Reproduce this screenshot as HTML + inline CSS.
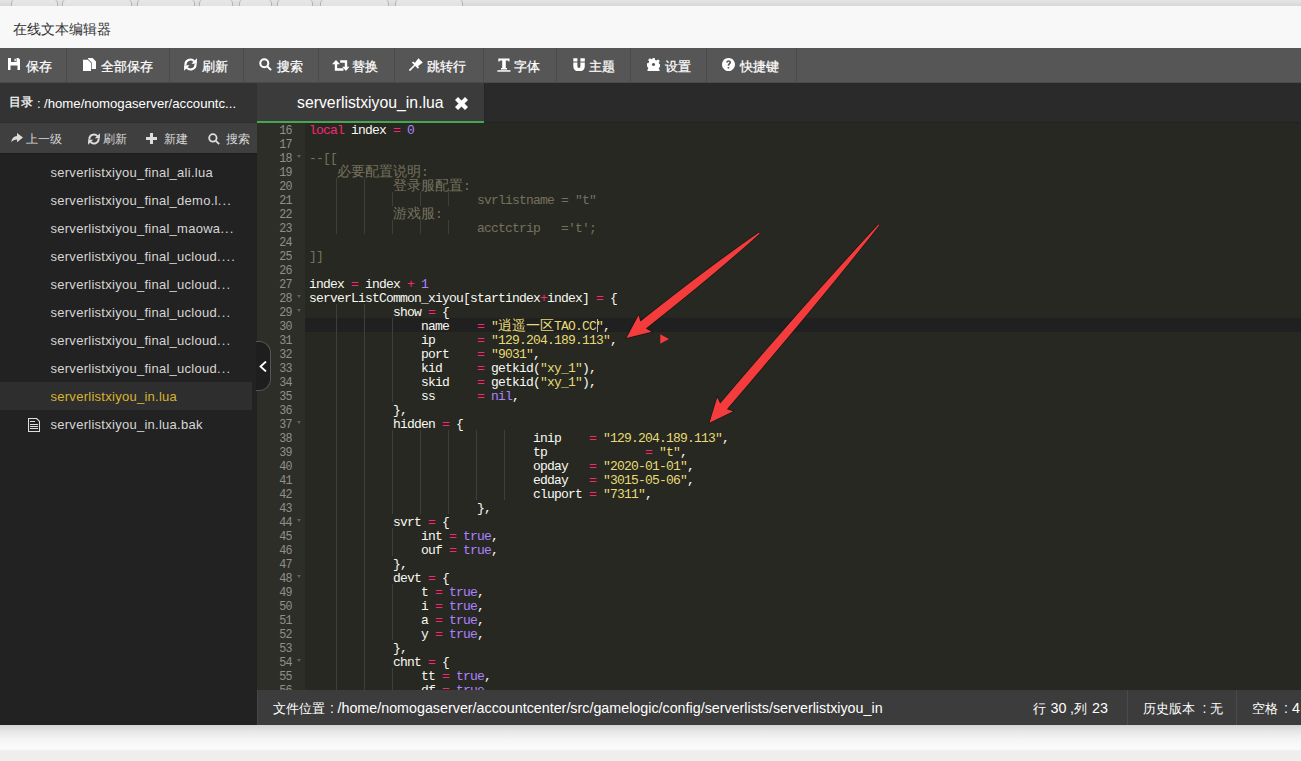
<!DOCTYPE html>
<html><head><meta charset="utf-8">
<style>
*{margin:0;padding:0;box-sizing:border-box}
html,body{width:1301px;height:761px;overflow:hidden;background:#eeeeee;font-family:"Liberation Sans",sans-serif}
.t{position:absolute;line-height:1;white-space:pre}
.k{-webkit-text-stroke:0.25px currentColor}
.ic{position:absolute}
#topstrip{position:absolute;left:0;top:0;width:1301px;height:6px;background:linear-gradient(#e4e4e4,#d8d8d8);overflow:hidden}
#topstrip b{position:absolute;top:-1px;height:12px;border:1px solid #b4b4b4;border-top:none;border-bottom:none;border-radius:6px 6px 0 0/4px 4px 0 0;background:linear-gradient(#e8e8e8,#dcdcdc)}
#title{position:absolute;left:0;top:6px;width:1301px;height:42px;background:#f8f8f8}
#toolbar{position:absolute;left:0;top:48px;width:1301px;height:35px;background:#565656;border-bottom:1px solid #4a4a4a}
.tsep{position:absolute;top:48px;width:1px;height:35px;background:#4b4b4b}
#side{position:absolute;left:0;top:83px;width:257px;height:642px;background:#222}
#sidehead{position:absolute;left:0;top:83px;width:257px;height:40px;background:#333}
#subbar{position:absolute;left:0;top:122px;width:257px;height:32px;background:#3f3f3f;border-top:1px solid #2e2e2e;border-bottom:1px solid #1c1c1c}
#sel{position:absolute;left:0;top:382px;width:252px;height:28px;background:#2e2e2e}
#tabbar{position:absolute;left:257px;top:83px;width:1044px;height:40px;background:#2a2a2a}
#tab{position:absolute;left:257px;top:83px;width:228px;height:40px;background:#3b3b3b;border-right:1px solid #262626}
#tabline{position:absolute;left:257px;top:122px;width:1044px;height:1px;background:#222}
#tabgreen{position:absolute;left:257px;top:120.5px;width:227px;height:2.5px;background:#46a84c}
#editor{position:absolute;left:257px;top:123px;width:1044px;height:567px;background:#272822}
#gutter{position:absolute;left:257px;top:123px;width:48px;height:567px;background:#2d2e28}
#codewrap{position:absolute;left:0;top:123px;width:1301px;height:567px;overflow:hidden}
#codewrap>*{margin-top:-123px}
#active{position:absolute;left:305px;top:318px;width:996px;height:14px;background:#202020}
#gactive{display:none}
.row{position:absolute;left:0;height:14px;width:1301px}
.cm{position:absolute;top:2px;font-family:"Liberation Mono",monospace;font-size:13px;letter-spacing:-0.8px;line-height:14px;white-space:pre}
.cj{position:absolute;top:0.5px;width:14px;font-size:13.5px;line-height:14px;text-align:center}
.g{position:absolute;width:1px;height:14px;background:#3e3f38}
.ln{position:absolute;left:257px;width:35px;transform:scaleX(0.9);transform-origin:34px 0;text-align:right;font-family:"Liberation Mono",monospace;font-size:13px;letter-spacing:-0.8px;line-height:14px;color:#8f908a;padding-top:2px;height:16px}
.fw{position:absolute;left:297px;width:0;height:0;border-left:2.5px solid transparent;border-right:2.5px solid transparent;border-top:3px solid #5f605a}
#cursor{position:absolute;left:597px;top:319px;width:1px;height:13px;background:#b8b8b0}
#status{position:absolute;left:257px;top:690px;width:1044px;height:35px;background:#3c3c3c;border-left:1px solid #464646}
.ssep{position:absolute;top:690px;width:1px;height:35px;background:#4a4a4a}
#bottom{position:absolute;left:0;top:725px;width:1301px;height:36px;background:linear-gradient(to bottom,#d4d4d4 0,#e6e6e6 6px,#f4f4f4 14px,#fafafa 22px,#fbfbfb 24px,#eeeeee 26px,#eeeeee 36px)}
#handle{position:absolute;left:256px;top:341px;width:15px;height:50px;background:#1e1e1e;border:1px solid #555;border-left:none;border-radius:0 12px 12px 0}
#chev{position:absolute;left:259px;top:361px}
#arrows{position:absolute;left:0;top:0}
</style></head><body>
<div id="topstrip"><b style="left:11px;width:47px"></b><b style="left:62px;width:70px"></b><b style="left:137px;width:58px"></b><b style="left:199px;width:34px"></b><b style="left:239px;width:33px"></b><b style="left:277px;width:36px"></b><b style="left:320px;width:69px"></b><b style="left:395px;width:68px"></b></div>
<div id="title"></div>
<span class="t" style="left:13.30px;top:21.74px;font-size:14px;color:#333">在线文本编辑器</span>
<div id="toolbar"></div>
<svg class="ic" style="left:8px;top:58px" width="12" height="12" viewBox="0 0 12 12" fill="#fff"><path fill-rule="evenodd" d="M0 0h10.5L12 1.5V12H0z M3 0h5.5v4H3z M2.5 7.5h7V12h-7z"/><path d="M6.5 0.8h1.3v2.4H6.5z"/></svg>
<span class="t k" style="left:26.00px;top:59.78px;font-size:13px;color:#fff">保存</span>
<svg class="ic" style="left:83px;top:58px" width="13" height="13" viewBox="0 0 13 13" fill="#fff"><path d="M0 1.7H4.8L8 5V13H0Z"/><path d="M5 0H9.6L13 3.4V11H8.7V4.6L5.3 1.2Z"/></svg>
<span class="t k" style="left:101.00px;top:59.78px;font-size:13px;color:#fff">全部保存</span>
<svg class="ic" style="left:184px;top:58px" width="13" height="13" viewBox="0 0 13 13" fill="#fff"><path fill="none" stroke="#fff" stroke-width="2.1" d="M1.5 7.2A5 5 0 0 1 10.2 3.3 M11.5 5.8A5 5 0 0 1 2.8 9.7"/><path d="M12.9 0.2V5.7H7.4Z M0.1 12.8V7.3H5.6Z"/></svg>
<span class="t k" style="left:202.00px;top:59.78px;font-size:13px;color:#fff">刷新</span>
<svg class="ic" style="left:259px;top:58px" width="13" height="13" viewBox="0 0 13 13" fill="#fff"><circle cx="5.3" cy="5.3" r="4" fill="none" stroke="#fff" stroke-width="2"/><path d="M7.8 9.2l1.4-1.4 3.6 3.6-1.4 1.4z"/></svg>
<span class="t k" style="left:277.00px;top:59.78px;font-size:13px;color:#fff">搜索</span>
<svg class="ic" style="left:332px;top:59.7px" width="17.4" height="11" viewBox="0 0 17.4 11" fill="#fff"><path d="M2.8 3.8H5.2V8.3H11.5V10.8H2.8Z M4 0L8 4.2H0Z"/><path d="M8.2 0.3H15.2V7.2H12.8V2.8H8.2Z M14 10.9L10.2 6.8H17.4Z"/></svg>
<span class="t k" style="left:352.00px;top:59.78px;font-size:13px;color:#fff">替换</span>
<svg class="ic" style="left:408.8px;top:58px" width="14" height="13" viewBox="0 0 14 13" fill="#fff"><path d="M2.8 4.6L4.4 3.6L10 9.2L9 10.8Z"/><path d="M5.4 5.4L9.4 0.2L13.8 4.6L8.6 8.6Z"/><path d="M0.4 12.6L6.2 6.8" stroke="#fff" stroke-width="1.6"/></svg>
<span class="t k" style="left:427.00px;top:59.78px;font-size:13px;color:#fff">跳转行</span>
<svg class="ic" style="left:496.5px;top:57.5px" width="14" height="14" viewBox="0 0 14 14" fill="#fff"><path d="M1.3 0.4H12.5V3.6H11.6L11 2.6H8.8V10H10V11.4H4V10H5.2V2.6H3L2.4 3.6H1.3Z"/><path d="M0.4 12.2H13.5V13.7H0.4Z"/></svg>
<span class="t k" style="left:514.00px;top:59.78px;font-size:13px;color:#fff">字体</span>
<svg class="ic" style="left:572.5px;top:57.5px" width="12" height="13.5" viewBox="0 0 12 13.5" fill="#fff"><path d="M0.3 0.3H4.4V3.5H0.3Z M7.4 0.3H11.8V3.5H7.4Z"/><path d="M0.3 4.6H4.4V8C4.4 9.3 5 10 6.1 10C7 10 7.4 9.3 7.4 8V4.6H11.8V8C11.8 11.5 9.5 13.5 6.05 13.5C2.6 13.5 0.3 11.5 0.3 8Z"/></svg>
<span class="t k" style="left:589.00px;top:59.78px;font-size:13px;color:#fff">主题</span>
<svg class="ic" style="left:647px;top:58px" width="13" height="13" viewBox="0 0 13 13" fill="#fff"><path fill-rule="evenodd" d="M5.3 0h2.4l0.4 1.9 1.3 0.6 1.7-1.1 1.7 1.7-1.1 1.7 0.6 1.3 1.9 0.4v2.4l-1.9 0.4-0.6 1.3 1.1 1.7-1.7 1.7-1.7-1.1-1.3 0.6-0.4 1.9H5.3l-0.4-1.9-1.3-0.6-1.7 1.1-1.7-1.7 1.1-1.7-0.6-1.3L-0.3 7.7V5.3l1.9-0.4 0.6-1.3-1.100-1.7 1.7-1.7 1.7 1.1 1.3-0.6z M6.5 4.9a1.6 1.6 0 1 0 0.01 0z"/></svg>
<span class="t k" style="left:665.00px;top:59.78px;font-size:13px;color:#fff">设置</span>
<svg class="ic" style="left:722px;top:58px" width="13" height="13" viewBox="0 0 13 13" fill="#fff"><path fill-rule="evenodd" d="M6.5 0a6.5 6.5 0 1 0 0.01 0z M4.2 4.6c0-1.4 1-2.3 2.4-2.3s2.4 0.9 2.4 2.2c0 1.6-1.7 1.7-1.7 2.9v0.3H5.7V7.3c0-1.7 1.6-1.9 1.6-2.7 0-0.5-0.3-0.8-0.8-0.8-0.5 0-0.8 0.4-0.8 0.9z M5.6 8.9h1.7v1.7H5.6z"/></svg>
<span class="t k" style="left:740.00px;top:59.78px;font-size:13px;color:#fff">快捷键</span>
<div class="tsep" style="left:66px"></div>
<div class="tsep" style="left:169px"></div>
<div class="tsep" style="left:243px"></div>
<div class="tsep" style="left:318px"></div>
<div class="tsep" style="left:394px"></div>
<div class="tsep" style="left:483px"></div>
<div class="tsep" style="left:556px"></div>
<div class="tsep" style="left:630px"></div>
<div class="tsep" style="left:706px"></div>
<div class="tsep" style="left:796px"></div>
<div id="side"></div><div id="sidehead"></div><div id="subbar"></div><div id="sel"></div>
<span class="t k" style="left:9.30px;top:97.33px;font-size:11.8px;color:#fff">目录</span>
<span class="t" style="left:37px;top:97.25px;font-size:13px;color:#fff">:</span>
<span class="t" style="left:44px;top:97.08px;font-size:13.2px;color:#fff">/home/nomogaserver/accountc...</span>
<svg class="ic" style="left:11px;top:133px" width="12" height="12" viewBox="0 0 12 12" fill="#ddd"><path d="M6 0L12 4.4L6 9.2V6.4C3.6 6.4 1.6 7.4 0.2 9.2C0.6 5.6 2.8 3.4 6 3.1Z"/></svg>
<span class="t" style="left:26.00px;top:132.52px;font-size:12px;color:#d8d8d8">上一级</span>
<svg class="ic" style="left:88px;top:133px" width="12" height="12" viewBox="0 0 13 13" fill="#ddd"><path fill="none" stroke="#ddd" stroke-width="2.1" d="M1.5 7.2A5 5 0 0 1 10.2 3.3 M11.5 5.8A5 5 0 0 1 2.8 9.7"/><path d="M12.9 0.2V5.7H7.4Z M0.1 12.8V7.3H5.6Z"/></svg>
<span class="t" style="left:103.00px;top:132.52px;font-size:12px;color:#d8d8d8">刷新</span>
<svg class="ic" style="left:146px;top:133px" width="11" height="11" viewBox="0 0 11.6 11.6" fill="#ddd"><path d="M4.2 0h3.2v4.2h4.2v3.2H7.4v4.2H4.2V7.4H0V4.2h4.2z"/></svg>
<span class="t" style="left:164.00px;top:132.52px;font-size:12px;color:#d8d8d8">新建</span>
<svg class="ic" style="left:208px;top:133px" width="12" height="12" viewBox="0 0 13 13" fill="#ddd"><circle cx="5.3" cy="5.3" r="4" fill="none" stroke="#ddd" stroke-width="2"/><path d="M7.8 9.2l1.4-1.4 3.6 3.6-1.4 1.4z"/></svg>
<span class="t" style="left:226.00px;top:132.52px;font-size:12px;color:#d8d8d8">搜索</span>
<span class="t" style="left:50.5px;top:165.55px;font-size:13px;color:#d6d6d6;letter-spacing:0.27px">serverlistxiyou_final_ali.lua</span>
<span class="t" style="left:50.5px;top:193.55px;font-size:13px;color:#d6d6d6;letter-spacing:0.27px">serverlistxiyou_final_demo.l<span style="letter-spacing:1.1px">...</span></span>
<span class="t" style="left:50.5px;top:221.55px;font-size:13px;color:#d6d6d6;letter-spacing:0.27px">serverlistxiyou_final_maowa<span style="letter-spacing:1.1px">...</span></span>
<span class="t" style="left:50.5px;top:249.55px;font-size:13px;color:#d6d6d6;letter-spacing:0.27px">serverlistxiyou_final_ucloud<span style="letter-spacing:1.1px">....</span></span>
<span class="t" style="left:50.5px;top:277.55px;font-size:13px;color:#d6d6d6;letter-spacing:0.27px">serverlistxiyou_final_ucloud<span style="letter-spacing:1.1px">...</span></span>
<span class="t" style="left:50.5px;top:305.55px;font-size:13px;color:#d6d6d6;letter-spacing:0.27px">serverlistxiyou_final_ucloud<span style="letter-spacing:1.1px">...</span></span>
<span class="t" style="left:50.5px;top:333.55px;font-size:13px;color:#d6d6d6;letter-spacing:0.27px">serverlistxiyou_final_ucloud<span style="letter-spacing:1.1px">...</span></span>
<span class="t" style="left:50.5px;top:361.55px;font-size:13px;color:#d6d6d6;letter-spacing:0.27px">serverlistxiyou_final_ucloud<span style="letter-spacing:1.1px">...</span></span>
<span class="t" style="left:50.5px;top:389.55px;font-size:13px;color:#d8b42c;letter-spacing:0.27px">serverlistxiyou_in.lua</span>
<span class="t" style="left:50.5px;top:417.55px;font-size:13px;color:#d6d6d6;letter-spacing:0.27px">serverlistxiyou_in.lua.bak</span>
<svg class="ic" style="left:28px;top:418px" width="12" height="14" viewBox="0 0 12 14" fill="none"><path fill="none" stroke="#ddd" stroke-width="1.1" d="M0.5 0.5H8.6L11.5 3.4V13.5H0.5Z"/><path fill="none" stroke="#ddd" stroke-width="1" shape-rendering="crispEdges" d="M2 3.5H7 M2 6.5H10 M2 8.5H10 M2 10.5H10"/></svg>
<div id="tabbar"></div><div id="tabline"></div><div id="tab"></div><div id="tabgreen"></div>
<span class="t" style="left:297px;top:95.17px;font-size:15.8px;color:#fff">serverlistxiyou_in.lua</span>
<svg class="ic" style="left:455px;top:97px" width="13" height="13" viewBox="0 0 13 13" fill="#fff"><path d="M3 0L6.5 3.5 10 0 13 3 9.5 6.5 13 10 10 13 6.5 9.5 3 13 0 10 3.5 6.5 0 3z"/></svg>
<div id="editor"></div><div id="gutter"></div><div id="active"></div><div id="gactive"></div>
<div id="codewrap"><div class="ln" style="top:122px">16</div>
<div class="ln" style="top:136px">17</div>
<div class="ln" style="top:150px">18</div>
<i class="fw" style="top:155px"></i>
<div class="ln" style="top:164px">19</div>
<div class="ln" style="top:178px">20</div>
<div class="ln" style="top:192px">21</div>
<div class="ln" style="top:206px">22</div>
<div class="ln" style="top:220px">23</div>
<div class="ln" style="top:234px">24</div>
<div class="ln" style="top:248px">25</div>
<div class="ln" style="top:262px">26</div>
<div class="ln" style="top:276px">27</div>
<div class="ln" style="top:290px">28</div>
<i class="fw" style="top:295px"></i>
<div class="ln" style="top:304px">29</div>
<i class="fw" style="top:309px"></i>
<div class="ln" style="top:318px">30</div>
<div class="ln" style="top:332px">31</div>
<div class="ln" style="top:346px">32</div>
<div class="ln" style="top:360px">33</div>
<div class="ln" style="top:374px">34</div>
<div class="ln" style="top:388px">35</div>
<div class="ln" style="top:402px">36</div>
<div class="ln" style="top:416px">37</div>
<i class="fw" style="top:421px"></i>
<div class="ln" style="top:430px">38</div>
<div class="ln" style="top:444px">39</div>
<div class="ln" style="top:458px">40</div>
<div class="ln" style="top:472px">41</div>
<div class="ln" style="top:486px">42</div>
<div class="ln" style="top:500px">43</div>
<div class="ln" style="top:514px">44</div>
<i class="fw" style="top:519px"></i>
<div class="ln" style="top:528px">45</div>
<div class="ln" style="top:542px">46</div>
<div class="ln" style="top:556px">47</div>
<div class="ln" style="top:570px">48</div>
<i class="fw" style="top:575px"></i>
<div class="ln" style="top:584px">49</div>
<div class="ln" style="top:598px">50</div>
<div class="ln" style="top:612px">51</div>
<div class="ln" style="top:626px">52</div>
<div class="ln" style="top:640px">53</div>
<div class="ln" style="top:654px">54</div>
<i class="fw" style="top:659px"></i>
<div class="ln" style="top:668px">55</div>
<div class="ln" style="top:682px">56</div><i class="g" style="left:336px;top:178px"></i>
<i class="g" style="left:364px;top:178px"></i>
<i class="g" style="left:336px;top:192px"></i>
<i class="g" style="left:364px;top:192px"></i>
<i class="g" style="left:392px;top:192px"></i>
<i class="g" style="left:420px;top:192px"></i>
<i class="g" style="left:448px;top:192px"></i>
<i class="g" style="left:336px;top:206px"></i>
<i class="g" style="left:364px;top:206px"></i>
<i class="g" style="left:336px;top:220px"></i>
<i class="g" style="left:364px;top:220px"></i>
<i class="g" style="left:392px;top:220px"></i>
<i class="g" style="left:420px;top:220px"></i>
<i class="g" style="left:448px;top:220px"></i>
<i class="g" style="left:336px;top:304px"></i>
<i class="g" style="left:364px;top:304px"></i>
<i class="g" style="left:336px;top:318px"></i>
<i class="g" style="left:364px;top:318px"></i>
<i class="g" style="left:392px;top:318px"></i>
<i class="g" style="left:336px;top:332px"></i>
<i class="g" style="left:364px;top:332px"></i>
<i class="g" style="left:392px;top:332px"></i>
<i class="g" style="left:336px;top:346px"></i>
<i class="g" style="left:364px;top:346px"></i>
<i class="g" style="left:392px;top:346px"></i>
<i class="g" style="left:336px;top:360px"></i>
<i class="g" style="left:364px;top:360px"></i>
<i class="g" style="left:392px;top:360px"></i>
<i class="g" style="left:336px;top:374px"></i>
<i class="g" style="left:364px;top:374px"></i>
<i class="g" style="left:392px;top:374px"></i>
<i class="g" style="left:336px;top:388px"></i>
<i class="g" style="left:364px;top:388px"></i>
<i class="g" style="left:392px;top:388px"></i>
<i class="g" style="left:336px;top:402px"></i>
<i class="g" style="left:364px;top:402px"></i>
<i class="g" style="left:336px;top:416px"></i>
<i class="g" style="left:364px;top:416px"></i>
<i class="g" style="left:336px;top:430px"></i>
<i class="g" style="left:364px;top:430px"></i>
<i class="g" style="left:392px;top:430px"></i>
<i class="g" style="left:420px;top:430px"></i>
<i class="g" style="left:448px;top:430px"></i>
<i class="g" style="left:476px;top:430px"></i>
<i class="g" style="left:504px;top:430px"></i>
<i class="g" style="left:336px;top:444px"></i>
<i class="g" style="left:364px;top:444px"></i>
<i class="g" style="left:392px;top:444px"></i>
<i class="g" style="left:420px;top:444px"></i>
<i class="g" style="left:448px;top:444px"></i>
<i class="g" style="left:476px;top:444px"></i>
<i class="g" style="left:504px;top:444px"></i>
<i class="g" style="left:336px;top:458px"></i>
<i class="g" style="left:364px;top:458px"></i>
<i class="g" style="left:392px;top:458px"></i>
<i class="g" style="left:420px;top:458px"></i>
<i class="g" style="left:448px;top:458px"></i>
<i class="g" style="left:476px;top:458px"></i>
<i class="g" style="left:504px;top:458px"></i>
<i class="g" style="left:336px;top:472px"></i>
<i class="g" style="left:364px;top:472px"></i>
<i class="g" style="left:392px;top:472px"></i>
<i class="g" style="left:420px;top:472px"></i>
<i class="g" style="left:448px;top:472px"></i>
<i class="g" style="left:476px;top:472px"></i>
<i class="g" style="left:504px;top:472px"></i>
<i class="g" style="left:336px;top:486px"></i>
<i class="g" style="left:364px;top:486px"></i>
<i class="g" style="left:392px;top:486px"></i>
<i class="g" style="left:420px;top:486px"></i>
<i class="g" style="left:448px;top:486px"></i>
<i class="g" style="left:476px;top:486px"></i>
<i class="g" style="left:504px;top:486px"></i>
<i class="g" style="left:336px;top:500px"></i>
<i class="g" style="left:364px;top:500px"></i>
<i class="g" style="left:392px;top:500px"></i>
<i class="g" style="left:420px;top:500px"></i>
<i class="g" style="left:448px;top:500px"></i>
<i class="g" style="left:336px;top:514px"></i>
<i class="g" style="left:364px;top:514px"></i>
<i class="g" style="left:336px;top:528px"></i>
<i class="g" style="left:364px;top:528px"></i>
<i class="g" style="left:392px;top:528px"></i>
<i class="g" style="left:336px;top:542px"></i>
<i class="g" style="left:364px;top:542px"></i>
<i class="g" style="left:392px;top:542px"></i>
<i class="g" style="left:336px;top:556px"></i>
<i class="g" style="left:364px;top:556px"></i>
<i class="g" style="left:336px;top:570px"></i>
<i class="g" style="left:364px;top:570px"></i>
<i class="g" style="left:336px;top:584px"></i>
<i class="g" style="left:364px;top:584px"></i>
<i class="g" style="left:392px;top:584px"></i>
<i class="g" style="left:336px;top:598px"></i>
<i class="g" style="left:364px;top:598px"></i>
<i class="g" style="left:392px;top:598px"></i>
<i class="g" style="left:336px;top:612px"></i>
<i class="g" style="left:364px;top:612px"></i>
<i class="g" style="left:392px;top:612px"></i>
<i class="g" style="left:336px;top:626px"></i>
<i class="g" style="left:364px;top:626px"></i>
<i class="g" style="left:392px;top:626px"></i>
<i class="g" style="left:336px;top:640px"></i>
<i class="g" style="left:364px;top:640px"></i>
<i class="g" style="left:336px;top:654px"></i>
<i class="g" style="left:364px;top:654px"></i>
<i class="g" style="left:336px;top:668px"></i>
<i class="g" style="left:364px;top:668px"></i>
<i class="g" style="left:392px;top:668px"></i>
<i class="g" style="left:336px;top:682px"></i>
<i class="g" style="left:364px;top:682px"></i>
<i class="g" style="left:392px;top:682px"></i>
<div class="row" style="top:122px"><span class="cm" style="left:309px;color:#F92672">local</span><span class="cm" style="left:344px;color:#F8F8F2"> index </span><span class="cm" style="left:393px;color:#F92672">=</span><span class="cm" style="left:400px;color:#F8F8F2"> </span><span class="cm" style="left:407px;color:#AE81FF">0</span></div>
<div class="row" style="top:150px"><span class="cm" style="left:309px;color:#75715E">--[[</span></div>
<div class="row" style="top:164px"><span class="cj" style="left:337px;color:#75715E">必</span><span class="cj" style="left:351px;color:#75715E">要</span><span class="cj" style="left:365px;color:#75715E">配</span><span class="cj" style="left:379px;color:#75715E">置</span><span class="cj" style="left:393px;color:#75715E">说</span><span class="cj" style="left:407px;color:#75715E">明</span><span class="cm" style="left:421px;color:#75715E">:</span></div>
<div class="row" style="top:178px"><span class="cj" style="left:393px;color:#75715E">登</span><span class="cj" style="left:407px;color:#75715E">录</span><span class="cj" style="left:421px;color:#75715E">服</span><span class="cj" style="left:435px;color:#75715E">配</span><span class="cj" style="left:449px;color:#75715E">置</span><span class="cm" style="left:463px;color:#75715E">:</span></div>
<div class="row" style="top:192px"><span class="cm" style="left:477px;color:#75715E">svrlistname = &quot;t&quot;</span></div>
<div class="row" style="top:206px"><span class="cj" style="left:393px;color:#75715E">游</span><span class="cj" style="left:407px;color:#75715E">戏</span><span class="cj" style="left:421px;color:#75715E">服</span><span class="cm" style="left:435px;color:#75715E">:</span></div>
<div class="row" style="top:220px"><span class="cm" style="left:477px;color:#75715E">acctctrip   =&#x27;t&#x27;;</span></div>
<div class="row" style="top:248px"><span class="cm" style="left:309px;color:#75715E">]]</span></div>
<div class="row" style="top:276px"><span class="cm" style="left:309px;color:#F8F8F2">index </span><span class="cm" style="left:351px;color:#F92672">=</span><span class="cm" style="left:358px;color:#F8F8F2"> index </span><span class="cm" style="left:407px;color:#F92672">+</span><span class="cm" style="left:414px;color:#F8F8F2"> </span><span class="cm" style="left:421px;color:#AE81FF">1</span></div>
<div class="row" style="top:290px"><span class="cm" style="left:309px;color:#F8F8F2">serverListCommon_xiyou[startindex</span><span class="cm" style="left:540px;color:#F92672">+</span><span class="cm" style="left:547px;color:#F8F8F2">index] </span><span class="cm" style="left:596px;color:#F92672">=</span><span class="cm" style="left:603px;color:#F8F8F2"> {</span></div>
<div class="row" style="top:304px"><span class="cm" style="left:393px;color:#F8F8F2">show </span><span class="cm" style="left:428px;color:#F92672">=</span><span class="cm" style="left:435px;color:#F8F8F2"> {</span></div>
<div class="row" style="top:318px"><span class="cm" style="left:421px;color:#F8F8F2">name</span><span class="cm" style="left:477px;color:#F92672">=</span><span class="cm" style="left:484px;color:#F8F8F2"> </span><span class="cm" style="left:491px;color:#E6DB74">&quot;</span><span class="cj" style="left:498px;color:#E6DB74">逍</span><span class="cj" style="left:512px;color:#E6DB74">遥</span><span class="cj" style="left:526px;color:#E6DB74">一</span><span class="cj" style="left:540px;color:#E6DB74">区</span><span class="cm" style="left:554px;color:#E6DB74">TAO.CC&quot;</span><span class="cm" style="left:603px;color:#F8F8F2">,</span></div>
<div class="row" style="top:332px"><span class="cm" style="left:421px;color:#F8F8F2">ip</span><span class="cm" style="left:477px;color:#F92672">=</span><span class="cm" style="left:484px;color:#F8F8F2"> </span><span class="cm" style="left:491px;color:#E6DB74">&quot;129.204.189.113&quot;</span><span class="cm" style="left:610px;color:#F8F8F2">,</span></div>
<div class="row" style="top:346px"><span class="cm" style="left:421px;color:#F8F8F2">port</span><span class="cm" style="left:477px;color:#F92672">=</span><span class="cm" style="left:484px;color:#F8F8F2"> </span><span class="cm" style="left:491px;color:#E6DB74">&quot;9031&quot;</span><span class="cm" style="left:533px;color:#F8F8F2">,</span></div>
<div class="row" style="top:360px"><span class="cm" style="left:421px;color:#F8F8F2">kid</span><span class="cm" style="left:477px;color:#F92672">=</span><span class="cm" style="left:484px;color:#F8F8F2"> getkid(</span><span class="cm" style="left:540px;color:#E6DB74">&quot;xy_1&quot;</span><span class="cm" style="left:582px;color:#F8F8F2">),</span></div>
<div class="row" style="top:374px"><span class="cm" style="left:421px;color:#F8F8F2">skid</span><span class="cm" style="left:477px;color:#F92672">=</span><span class="cm" style="left:484px;color:#F8F8F2"> getkid(</span><span class="cm" style="left:540px;color:#E6DB74">&quot;xy_1&quot;</span><span class="cm" style="left:582px;color:#F8F8F2">),</span></div>
<div class="row" style="top:388px"><span class="cm" style="left:421px;color:#F8F8F2">ss</span><span class="cm" style="left:477px;color:#F92672">=</span><span class="cm" style="left:484px;color:#F8F8F2"> </span><span class="cm" style="left:491px;color:#AE81FF">nil</span><span class="cm" style="left:512px;color:#F8F8F2">,</span></div>
<div class="row" style="top:402px"><span class="cm" style="left:393px;color:#F8F8F2">},</span></div>
<div class="row" style="top:416px"><span class="cm" style="left:393px;color:#F8F8F2">hidden </span><span class="cm" style="left:442px;color:#F92672">=</span><span class="cm" style="left:449px;color:#F8F8F2"> {</span></div>
<div class="row" style="top:430px"><span class="cm" style="left:533px;color:#F8F8F2">inip</span><span class="cm" style="left:589px;color:#F92672">=</span><span class="cm" style="left:596px;color:#F8F8F2"> </span><span class="cm" style="left:603px;color:#E6DB74">&quot;129.204.189.113&quot;</span><span class="cm" style="left:722px;color:#F8F8F2">,</span></div>
<div class="row" style="top:444px"><span class="cm" style="left:533px;color:#F8F8F2">tp</span><span class="cm" style="left:645px;color:#F92672">=</span><span class="cm" style="left:652px;color:#F8F8F2"> </span><span class="cm" style="left:659px;color:#E6DB74">&quot;t&quot;</span><span class="cm" style="left:680px;color:#F8F8F2">,</span></div>
<div class="row" style="top:458px"><span class="cm" style="left:533px;color:#F8F8F2">opday</span><span class="cm" style="left:589px;color:#F92672">=</span><span class="cm" style="left:596px;color:#F8F8F2"> </span><span class="cm" style="left:603px;color:#E6DB74">&quot;2020-01-01&quot;</span><span class="cm" style="left:687px;color:#F8F8F2">,</span></div>
<div class="row" style="top:472px"><span class="cm" style="left:533px;color:#F8F8F2">edday</span><span class="cm" style="left:589px;color:#F92672">=</span><span class="cm" style="left:596px;color:#F8F8F2"> </span><span class="cm" style="left:603px;color:#E6DB74">&quot;3015-05-06&quot;</span><span class="cm" style="left:687px;color:#F8F8F2">,</span></div>
<div class="row" style="top:486px"><span class="cm" style="left:533px;color:#F8F8F2">cluport </span><span class="cm" style="left:589px;color:#F92672">=</span><span class="cm" style="left:596px;color:#F8F8F2"> </span><span class="cm" style="left:603px;color:#E6DB74">&quot;7311&quot;</span><span class="cm" style="left:645px;color:#F8F8F2">,</span></div>
<div class="row" style="top:500px"><span class="cm" style="left:477px;color:#F8F8F2">},</span></div>
<div class="row" style="top:514px"><span class="cm" style="left:393px;color:#F8F8F2">svrt </span><span class="cm" style="left:428px;color:#F92672">=</span><span class="cm" style="left:435px;color:#F8F8F2"> {</span></div>
<div class="row" style="top:528px"><span class="cm" style="left:421px;color:#F8F8F2">int </span><span class="cm" style="left:449px;color:#F92672">=</span><span class="cm" style="left:456px;color:#F8F8F2"> </span><span class="cm" style="left:463px;color:#AE81FF">true</span><span class="cm" style="left:491px;color:#F8F8F2">,</span></div>
<div class="row" style="top:542px"><span class="cm" style="left:421px;color:#F8F8F2">ouf </span><span class="cm" style="left:449px;color:#F92672">=</span><span class="cm" style="left:456px;color:#F8F8F2"> </span><span class="cm" style="left:463px;color:#AE81FF">true</span><span class="cm" style="left:491px;color:#F8F8F2">,</span></div>
<div class="row" style="top:556px"><span class="cm" style="left:393px;color:#F8F8F2">},</span></div>
<div class="row" style="top:570px"><span class="cm" style="left:393px;color:#F8F8F2">devt </span><span class="cm" style="left:428px;color:#F92672">=</span><span class="cm" style="left:435px;color:#F8F8F2"> {</span></div>
<div class="row" style="top:584px"><span class="cm" style="left:421px;color:#F8F8F2">t </span><span class="cm" style="left:435px;color:#F92672">=</span><span class="cm" style="left:442px;color:#F8F8F2"> </span><span class="cm" style="left:449px;color:#AE81FF">true</span><span class="cm" style="left:477px;color:#F8F8F2">,</span></div>
<div class="row" style="top:598px"><span class="cm" style="left:421px;color:#F8F8F2">i </span><span class="cm" style="left:435px;color:#F92672">=</span><span class="cm" style="left:442px;color:#F8F8F2"> </span><span class="cm" style="left:449px;color:#AE81FF">true</span><span class="cm" style="left:477px;color:#F8F8F2">,</span></div>
<div class="row" style="top:612px"><span class="cm" style="left:421px;color:#F8F8F2">a </span><span class="cm" style="left:435px;color:#F92672">=</span><span class="cm" style="left:442px;color:#F8F8F2"> </span><span class="cm" style="left:449px;color:#AE81FF">true</span><span class="cm" style="left:477px;color:#F8F8F2">,</span></div>
<div class="row" style="top:626px"><span class="cm" style="left:421px;color:#F8F8F2">y </span><span class="cm" style="left:435px;color:#F92672">=</span><span class="cm" style="left:442px;color:#F8F8F2"> </span><span class="cm" style="left:449px;color:#AE81FF">true</span><span class="cm" style="left:477px;color:#F8F8F2">,</span></div>
<div class="row" style="top:640px"><span class="cm" style="left:393px;color:#F8F8F2">},</span></div>
<div class="row" style="top:654px"><span class="cm" style="left:393px;color:#F8F8F2">chnt </span><span class="cm" style="left:428px;color:#F92672">=</span><span class="cm" style="left:435px;color:#F8F8F2"> {</span></div>
<div class="row" style="top:668px"><span class="cm" style="left:421px;color:#F8F8F2">tt </span><span class="cm" style="left:442px;color:#F92672">=</span><span class="cm" style="left:449px;color:#F8F8F2"> </span><span class="cm" style="left:456px;color:#AE81FF">true</span><span class="cm" style="left:484px;color:#F8F8F2">,</span></div>
<div class="row" style="top:682px"><span class="cm" style="left:421px;color:#F8F8F2">df </span><span class="cm" style="left:442px;color:#F92672">=</span><span class="cm" style="left:449px;color:#F8F8F2"> </span><span class="cm" style="left:456px;color:#AE81FF">true</span><span class="cm" style="left:484px;color:#F8F8F2">,</span></div><div id="cursor"></div></div>
<div id="status"></div>
<span class="t" style="left:273.00px;top:701.78px;font-size:13px;color:#fff">文件位置</span>
<span class="t" style="left:330px;top:700.90px;font-size:14px;color:#fff">:</span>
<span class="t" style="left:337.5px;top:700.64px;font-size:14.3px;color:#fff">/home/nomogaserver/accountcenter/src/gamelogic/config/serverlists/serverlistxiyou_in</span>
<span class="t" style="left:1032.70px;top:701.78px;font-size:13px;color:#fff">行</span>
<span class="t" style="left:1050.5px;top:700.64px;font-size:14.3px;color:#fff">30</span>
<span class="t" style="left:1070px;top:700.64px;font-size:14.3px;color:#fff">,</span>
<span class="t" style="left:1074.00px;top:701.78px;font-size:13px;color:#fff">列</span>
<span class="t" style="left:1092px;top:700.64px;font-size:14.3px;color:#fff">23</span>
<div class="ssep" style="left:1127px"></div>
<span class="t" style="left:1143.30px;top:701.78px;font-size:13px;color:#fff">历史版本</span>
<span class="t" style="left:1202.5px;top:700.90px;font-size:14px;color:#fff">:</span>
<span class="t" style="left:1210.30px;top:701.78px;font-size:13px;color:#fff">无</span>
<div class="ssep" style="left:1236px"></div>
<span class="t" style="left:1251.80px;top:701.78px;font-size:13px;color:#fff">空格</span>
<span class="t" style="left:1284px;top:700.90px;font-size:14px;color:#fff">:</span>
<span class="t" style="left:1292px;top:700.64px;font-size:14.3px;color:#fff">4</span>
<div id="bottom"></div><div id="handle"></div><svg id="chev" width="8" height="11" viewBox="0 0 8 11"><path d="M7 0.5L1.5 5.5 7 10.5" fill="none" stroke="#fff" stroke-width="1.8"/></svg>
<svg id="arrows" width="1301" height="761" viewBox="0 0 1301 761">
<path d="M759.71,233.39 Q716.22,273.02 645.86,328.40 L651.60,331.63 L626.5,338.1 L638.58,315.16 L640.40,321.50 Q710.51,265.80 759.09,232.61 Z" fill="none" stroke="#000" stroke-opacity="0.35" stroke-width="1.6"/><path d="M759.71,233.39 Q716.22,273.02 645.86,328.40 L651.60,331.63 L626.5,338.1 L638.58,315.16 L640.40,321.50 Q710.51,265.80 759.09,232.61 Z" fill="#f53c3c"/>
<path d="M879.48,225.03 Q820.76,299.87 726.89,409.16 L733.15,411.23 L709.5,422.7 L717.20,397.57 L720.21,403.43 Q813.78,293.89 878.72,224.37 Z" fill="none" stroke="#000" stroke-opacity="0.35" stroke-width="1.6"/><path d="M879.48,225.03 Q820.76,299.87 726.89,409.16 L733.15,411.23 L709.5,422.7 L717.20,397.57 L720.21,403.43 Q813.78,293.89 878.72,224.37 Z" fill="#f53c3c"/>
<polygon points="660.3,334.2 668.9,339.1 660.3,343.7" fill="#f53c3c"/>
</svg>
</body></html>
